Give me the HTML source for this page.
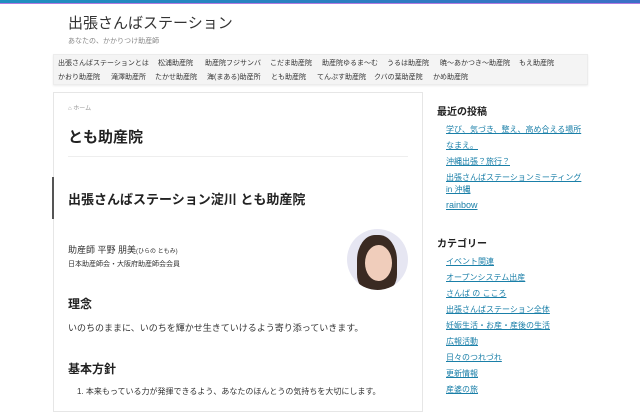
<!DOCTYPE html>
<html><head><meta charset="utf-8"><style>
*{margin:0;padding:0;box-sizing:border-box}
body{width:640px;height:400px;overflow:hidden;background:#fff;font-family:"Liberation Sans","Noto Sans CJK JP",sans-serif;color:#333;position:relative}
.a{position:absolute;white-space:nowrap}
.top{position:absolute;left:0;top:0;width:640px;height:4px;background:linear-gradient(90deg,#1f8fbf,#2a7fc0,#3b6fc6);border-bottom:1px solid #b07ae0}
.nav{position:absolute;left:53px;top:54px;width:535px;height:31px;background:#f4f4f4;border:1px solid #ececec;box-shadow:0 1px 2px rgba(0,0,0,.08);font-size:7px;color:#333}
.nav span{position:absolute}
.card{position:absolute;left:53px;top:92px;width:370px;height:320px;border:1px solid #e6e6e6;background:#fff}
.sb a{position:absolute;left:446px;font-size:8px;color:#1a7fa8;text-decoration:underline;white-space:nowrap}
</style></head><body>
<div class="top"></div>
<div class="a" style="left:68px;top:12px;font-size:15px;color:#333">出張さんばステーション</div>
<div class="a" style="left:68px;top:36px;font-size:7px;color:#888">あなたの、かかりつけ助産師</div>
<div class="nav">
<span style="left:4px;top:3px">出張さんばステーションとは</span>
<span style="left:104px;top:3px">松浦助産院</span>
<span style="left:151px;top:3px">助産院フジサンバ</span>
<span style="left:216px;top:3px">こだま助産院</span>
<span style="left:268px;top:3px">助産院ゆるま〜む</span>
<span style="left:333px;top:3px">うるは助産院</span>
<span style="left:386px;top:3px">暁〜あかつき〜助産院</span>
<span style="left:465px;top:3px">もえ助産院</span>
<span style="left:4px;top:17px">かおり助産院</span>
<span style="left:57px;top:17px">滝澤助産所</span>
<span style="left:101px;top:17px">たかせ助産院</span>
<span style="left:153px;top:17px">海(まある)助産所</span>
<span style="left:217px;top:17px">とも助産院</span>
<span style="left:263px;top:17px">てんぷす助産院</span>
<span style="left:320px;top:17px">クバの葉助産院</span>
<span style="left:379px;top:17px">かめ助産院</span>
</div>
<div class="card"></div>
<div class="a" style="left:68px;top:103px;font-size:6px;color:#999">⌂ ホーム</div>
<div class="a" style="left:68px;top:126px;font-size:15px;font-weight:bold;color:#222">とも助産院</div>
<div class="a" style="left:68px;top:156px;width:340px;height:1px;background:#eee"></div>
<div class="a" style="left:52px;top:177px;width:2px;height:42px;background:#555"></div>
<div class="a" style="left:68px;top:189px;font-size:13px;font-weight:bold;color:#222">出張さんばステーション淀川 とも助産院</div>
<div class="a" style="left:68px;top:243px;font-size:9px;color:#333">助産師 平野 朋美<span style="font-size:6px">(ひらの ともみ)</span></div>
<div class="a" style="left:68px;top:259px;font-size:7px;color:#333">日本助産師会・大阪府助産師会会員</div>
<div class="a" style="left:347px;top:229px;width:61px;height:61px;border-radius:50%;overflow:hidden;background:#e6e6f2">
<div class="a" style="left:10px;top:6px;width:40px;height:56px;border-radius:45% 45% 30% 30%;background:#3a2a22"></div>
<div class="a" style="left:18px;top:16px;width:27px;height:36px;border-radius:50%;background:#f0cdbb"></div>
</div>
<div class="a" style="left:68px;top:295px;font-size:12px;font-weight:bold;color:#222">理念</div>
<div class="a" style="left:68px;top:321px;font-size:9px;color:#333">いのちのままに、いのちを輝かせ生きていけるよう寄り添っていきます。</div>
<div class="a" style="left:68px;top:360px;font-size:12px;font-weight:bold;color:#222">基本方針</div>
<div class="a" style="left:77px;top:386px;font-size:8px;color:#333">1. 本来もっている力が発揮できるよう、あなたのほんとうの気持ちを大切にします。</div>
<div class="a" style="left:437px;top:103px;font-size:10px;font-weight:bold;color:#222">最近の投稿</div>
<div class="sb">
<a style="top:124px">学び、気づき、整え、高め合える場所</a>
<a style="top:140px">なまえ。</a>
<a style="top:156px">沖縄出張？旅行？</a>
<a style="top:172px">出張さんばステーションミーティング</a>
<a style="top:184px">in 沖縄</a>
<a style="top:200px;font-size:9px">rainbow</a>
<a style="top:256px">イベント関連</a>
<a style="top:272px">オープンシステム出産</a>
<a style="top:288px">さんば の こころ</a>
<a style="top:304px">出張さんばステーション全体</a>
<a style="top:320px">妊娠生活・お産・産後の生活</a>
<a style="top:336px">広報活動</a>
<a style="top:352px">日々のつれづれ</a>
<a style="top:368px">更新情報</a>
<a style="top:384px">産婆の旅</a>
</div>
<div class="a" style="left:437px;top:235px;font-size:10px;font-weight:bold;color:#222">カテゴリー</div>
</body></html>
